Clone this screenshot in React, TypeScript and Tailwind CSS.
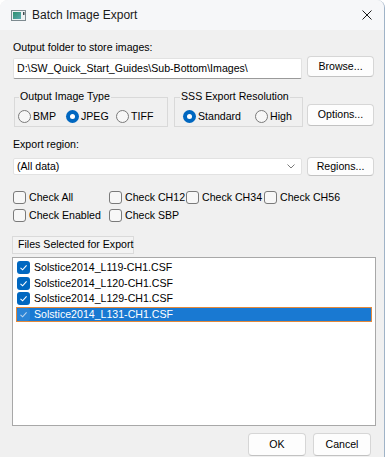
import React from "react";

function Radio({ checked, label, cls }: { checked?: boolean; label: string; cls: string }) {
  return (
    <div className={"flex items-center h-[13px] whitespace-nowrap " + cls}>
      {checked ? (
        <span className="w-[13px] h-[13px] rounded-full bg-[#0067c0] flex items-center justify-center shrink-0">
          <span className="w-[5px] h-[5px] rounded-full bg-white" />
        </span>
      ) : (
        <span className="w-[13px] h-[13px] rounded-full border border-[#7a7a7a] bg-[#f7f7f7] shrink-0" />
      )}
      <span className="ml-[2px] leading-[13px]">{label}</span>
    </div>
  );
}

function Check({ label, cls }: { label: string; cls: string }) {
  return (
    <div className={"flex items-center h-[13px] whitespace-nowrap shrink-0 " + cls}>
      <span className="w-[13px] h-[13px] rounded-[3px] border border-[#7a7a7a] bg-[#f7f7f7] shrink-0" />
      <span className="ml-[3px] leading-[13px]">{label}</span>
    </div>
  );
}

function Btn({ label, cls }: { label: string; cls: string }) {
  return (
    <div
      className={
        "flex items-center justify-center rounded-[4px] border bg-[#fdfdfd] border-[#d6d6d6] border-b-[#c2c2c2] whitespace-nowrap shrink-0 " +
        cls
      }
    >
      {label}
    </div>
  );
}

function FileRow({ name, selected }: { name: string; selected?: boolean }) {
  return (
    <div
      className={
        "mx-[3px] h-[15.6px] flex items-center border whitespace-nowrap " +
        (selected ? "bg-[#1979d2] border-[#e4893a] text-white" : "border-transparent")
      }
    >
      <span
        className={
          "w-[13px] h-[13px] rounded-[3px] flex items-center justify-center shrink-0 " +
          (selected ? "bg-[#2a84d6]" : "bg-[#0067c0]")
        }
      >
        <svg width="9" height="9" viewBox="0 0 9 9">
          <path
            d="M1.5 4.8 L3.6 6.8 L7.6 2.3"
            fill="none"
            stroke={selected ? "#b9d4ee" : "#ffffff"}
            strokeWidth="1.1"
          />
        </svg>
      </span>
      <span className="ml-[4px] leading-[13px]">{name}</span>
    </div>
  );
}

export default function App() {
  return (
    <div className="w-[387px] h-[457px] bg-white font-['Liberation_Sans',Arial,sans-serif] text-[10.6px] text-black overflow-hidden">
      <div className="w-[385px] h-[457px] bg-[#f0f0f0] border-r border-[#9fb3c7] rounded-tl-[8px] rounded-tr-[8px] overflow-hidden flex flex-col">
        {/* title bar */}
        <div className="h-[30px] bg-[#f6f7f9] flex items-center shrink-0">
          <svg className="ml-[11px]" width="15" height="11" viewBox="0 0 15 11">
            <rect x="0.5" y="0.5" width="14" height="10" fill="#eef2f3" stroke="#7d8a90" />
            <defs>
              <linearGradient id="g" x1="0" y1="0" x2="1" y2="1">
                <stop offset="0" stopColor="#2f8f6e" />
                <stop offset="1" stopColor="#5aa8b0" />
              </linearGradient>
            </defs>
            <rect x="2" y="2" width="8" height="7" fill="url(#g)" />
            <rect x="12" y="2" width="1.5" height="3" fill="#3f4a50" />
          </svg>
          <span className="ml-[6px] text-[12px] text-[#1a1a1a]">Batch Image Export</span>
          <div className="flex-1" />
          <svg className="mr-[12px]" width="10" height="10" viewBox="0 0 10 10">
            <path d="M0.5 0.5 L9.5 9.5 M9.5 0.5 L0.5 9.5" stroke="#1a1a1a" strokeWidth="1" />
          </svg>
        </div>

        {/* body */}
        <div className="px-[13px] flex flex-col">
          <div className="mt-[11px] h-[13px] leading-[13px] whitespace-nowrap">Output folder to store images:</div>

          <div className="mt-[2px] flex items-start h-[23px]">
            <div className="mt-[2px] w-[289px] h-[21px] bg-white border border-[#e2e2e2] border-b-[#9a9a9a] rounded-[2px] flex items-center pl-[3px] whitespace-nowrap shrink-0">
              D:\SW_Quick_Start_Guides\Sub-Bottom\Images\
            </div>
            <Btn label="Browse..." cls="ml-[5px] w-[67px] h-[21px]" />
          </div>

          <div className="mt-[11px] flex items-start">
            <div className="relative ml-[1px] w-[154px] pt-[7px] shrink-0">
              <div className="h-[30px] border border-[#d9d9d9] pt-[8px] pl-[3px] flex items-center">
                <Radio label="BMP" cls="w-[48px]" />
                <Radio label="JPEG" checked cls="w-[50px]" />
                <Radio label="TIFF" cls="" />
              </div>
              <span className="absolute top-0 left-[5px] px-[1px] bg-[#f0f0f0] leading-[13px] whitespace-nowrap">Output Image Type</span>
            </div>
            <div className="relative ml-[6px] w-[129px] pt-[7px] shrink-0">
              <div className="h-[30px] border border-[#d9d9d9] pt-[8px] pl-[8px] flex items-center">
                <Radio label="Standard" checked cls="w-[72px]" />
                <Radio label="High" cls="" />
              </div>
              <span className="absolute top-0 left-[6px] px-[1px] bg-[#f0f0f0] leading-[13px] whitespace-nowrap">SSS Export Resolution</span>
            </div>
            <Btn label="Options..." cls="ml-[4px] mt-[14px] w-[67px] h-[22px]" />
          </div>

          <div className="mt-[11px] h-[13px] leading-[13px]">Export region:</div>

          <div className="mt-[6px] flex items-start h-[19px]">
            <div className="mt-[1px] w-[289px] h-[17px] bg-white border border-[#e2e2e2] rounded-[2px] flex items-center pl-[3px] pr-[6px] shrink-0">
              <span className="flex-1">(All data)</span>
              <svg width="8" height="5" viewBox="0 0 8 5">
                <path d="M0.5 0.5 L4 4 L7.5 0.5" fill="none" stroke="#7a7a7a" strokeWidth="1" />
              </svg>
            </div>
            <Btn label="Regions..." cls="ml-[5px] w-[67px] h-[19px]" />
          </div>

          <div className="mt-[15px] flex">
            <Check label="Check All" cls="w-[96px]" />
            <Check label="Check CH12" cls="w-[77px]" />
            <Check label="Check CH34" cls="w-[78px]" />
            <Check label="Check CH56" cls="" />
          </div>
          <div className="mt-[5px] flex">
            <Check label="Check Enabled" cls="w-[96px]" />
            <Check label="Check SBP" cls="" />
          </div>

          <div className="mt-[14px] -ml-[1px] w-[122px] h-[18px] border border-[#dadada] bg-[#f3f3f3] flex items-center pl-[5px] whitespace-nowrap">
            Files Selected for Export
          </div>

          <div className="mt-[3px] -ml-[1px] w-[364px] h-[169px] bg-white border border-[#a8a8a8] pt-[2px]">
            <FileRow name="Solstice2014_L119-CH1.CSF" />
            <FileRow name="Solstice2014_L120-CH1.CSF" />
            <FileRow name="Solstice2014_L129-CH1.CSF" />
            <FileRow name="Solstice2014_L131-CH1.CSF" selected />
          </div>

          <div className="mt-[7px] flex justify-end">
            <Btn label="OK" cls="w-[58px] h-[23px] border-[#5a9fdc] border-b-[#3d8ad3]" />
            <Btn label="Cancel" cls="ml-[7px] w-[58px] h-[23px]" />
          </div>
        </div>
      </div>
    </div>
  );
}
